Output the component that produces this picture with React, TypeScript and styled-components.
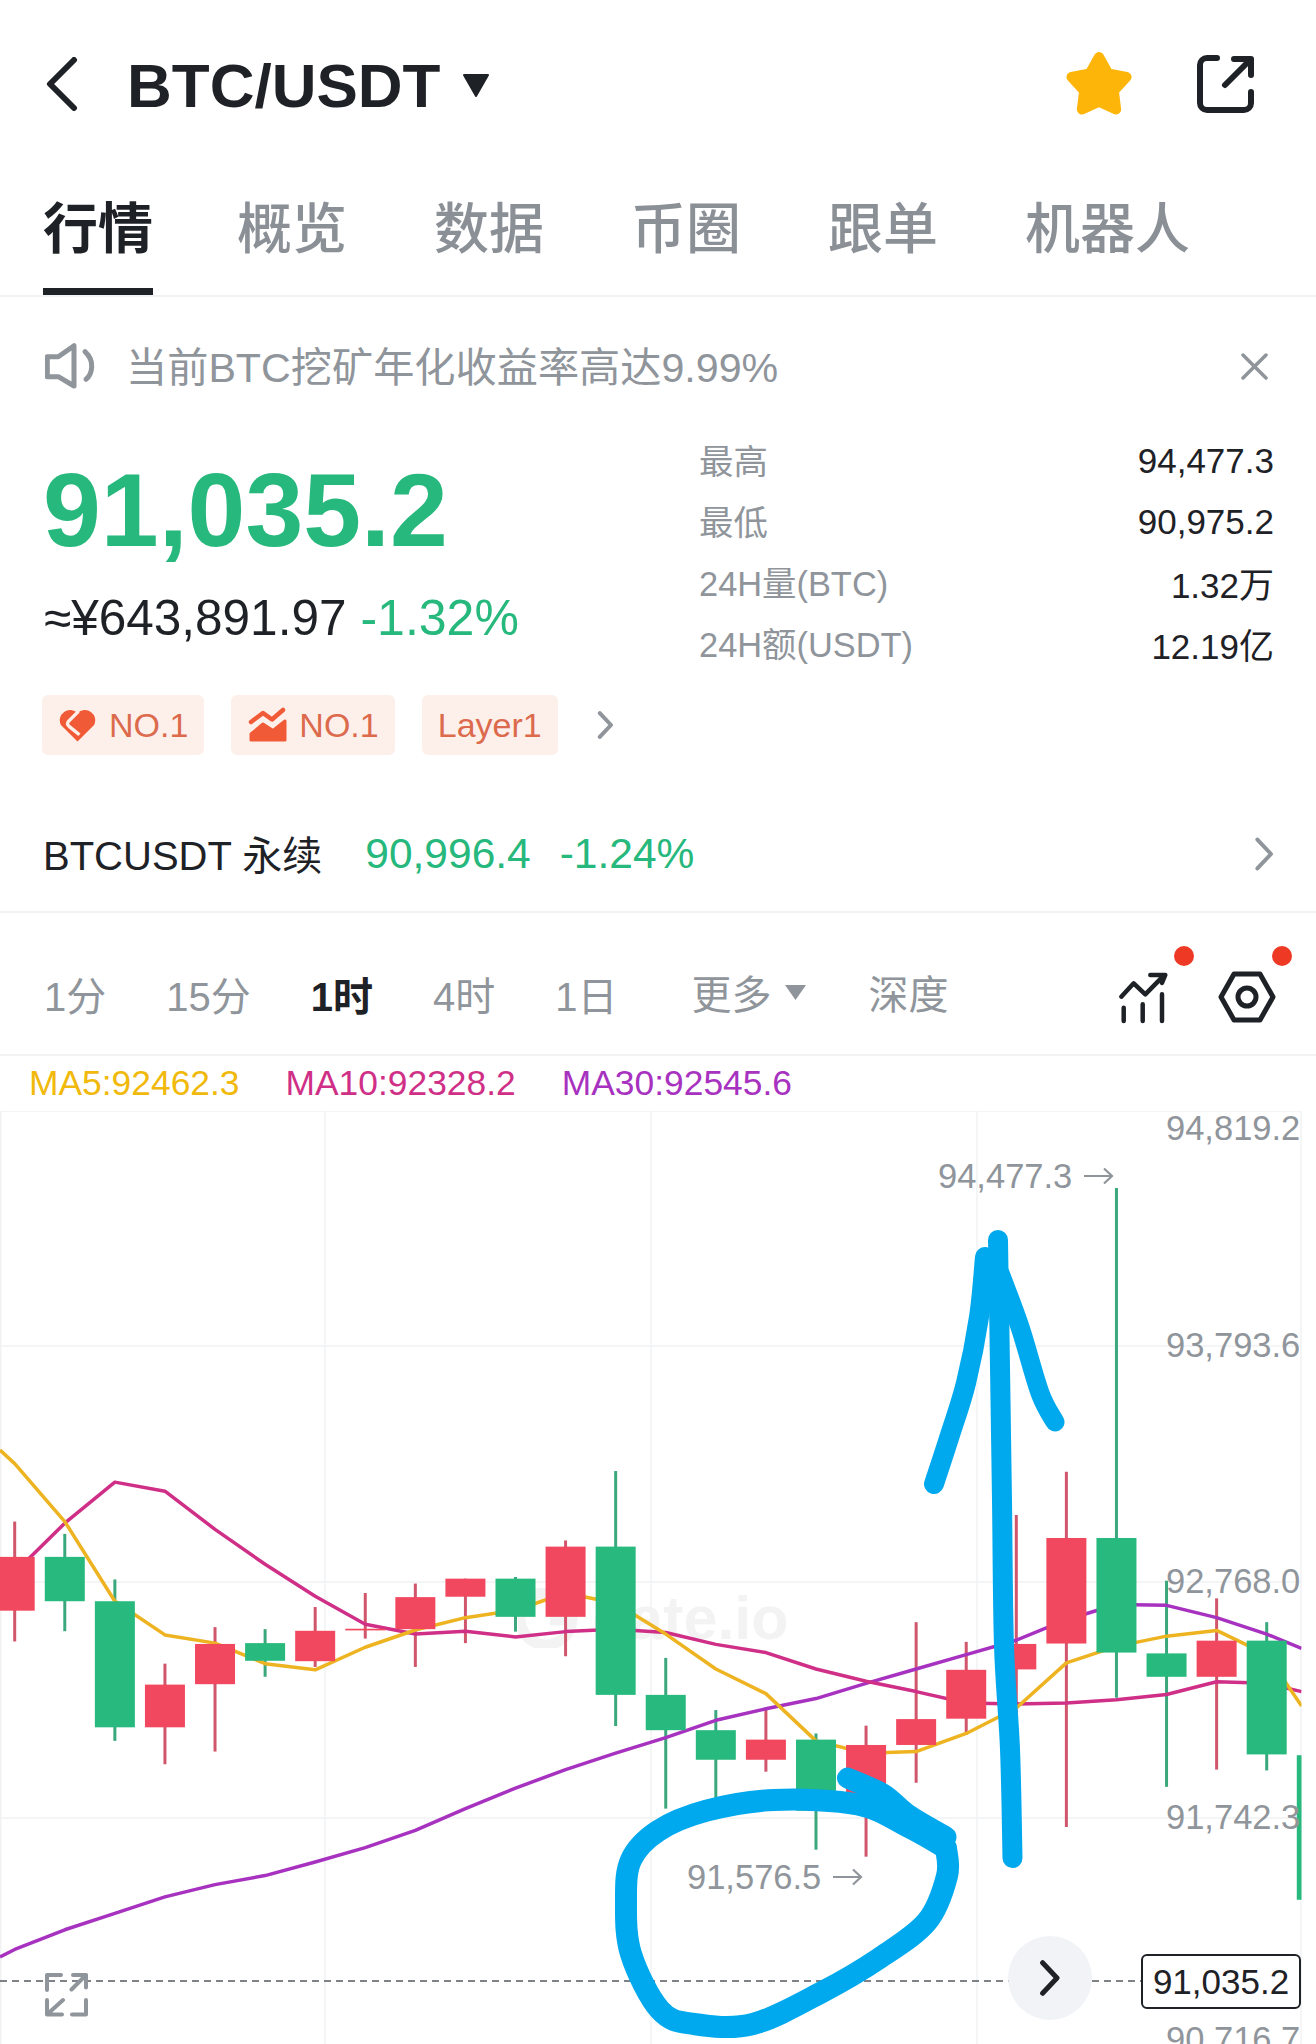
import React from "react";
import styled, { createGlobalStyle } from "styled-components";

const FONT = `"Liberation Sans", "Noto Sans CJK SC", sans-serif`;
const DARK = "#1e2126";
const GREY = "#8f959b";
const GREEN = "#26b87c";
const LINE = "#f1f2f4";
const CHART_TOP = 1111;

// sampled positions: candles sit on a 50.08px grid
const slotX = (i: number) => 14.7 + 50.08 * i;
const sampleY = (v: number) => 1400 + v / 2.435;

type Candle = [boolean, number, number, number, number];

// [is green, high, low, body top, body bottom]
const CANDLES: Candle[] = [
  [false, 296, 588, 382, 513],
  [true, 326, 563, 382, 490],
  [true, 437, 830, 490, 797],
  [false, 642, 887, 693, 797],
  [false, 553, 856, 594, 692],
  [true, 558, 674, 592, 635],
  [false, 504, 650, 562, 636],
  [false, 470, 581, 557, 561],
  [false, 447, 650, 480, 558],
  [false, 435, 592, 435, 479],
  [true, 431, 564, 435, 528],
  [false, 342, 624, 357, 528],
  [true, 173, 794, 357, 718],
  [true, 628, 995, 718, 804],
  [true, 755, 972, 804, 876],
  [false, 750, 905, 827, 876],
  [true, 812, 1095, 827, 1000],
  [false, 793, 1112, 840, 990],
  [false, 541, 932, 777, 840],
  [false, 589, 815, 657, 776],
  [false, 280, 800, 594, 656],
  [false, 175, 1040, 336, 593],
  [true, -516, 725, 336, 615],
  [true, 440, 942, 617, 674],
  [false, 483, 900, 586, 674],
  [true, 541, 902, 586, 863],
  [true, 865, 1217, 865, 1217],
];

const MA5 = [155, 296, 490, 572, 592, 642, 657, 602, 560, 530, 512, 470, 495, 570, 655, 715, 830, 860, 856, 812, 750, 640, 600, 575, 561, 620];
const MA10 = [420, 300, 200, 222, 315, 400, 478, 546, 570, 563, 577, 564, 558, 566, 595, 615, 655, 685, 710, 738, 740, 738, 730, 717, 686, 690];
const MA30 = [1338, 1290, 1250, 1210, 1180, 1158, 1125, 1090, 1048, 995, 945, 900, 860, 822, 780, 752, 727, 690, 655, 620, 585, 535, 498, 500, 530, 570];

const maPoints = (values: number[], first: number, last: number) => {
  const pts = values.map((v, i) => `${slotX(i)},${sampleY(v)}`);
  return [`0,${sampleY(first)}`, ...pts, `1301.6,${sampleY(last)}`].join(" ");
};

// smooth a hand drawn stroke through its points
const smooth = (pts: number[][]) => {
  let d = `M${pts[0][0]} ${pts[0][1]}`;
  for (let i = 0; i < pts.length - 1; i++) {
    const p0 = pts[Math.max(i - 1, 0)];
    const p1 = pts[i];
    const p2 = pts[i + 1];
    const p3 = pts[Math.min(i + 2, pts.length - 1)];
    d += `C${p1[0] + (p2[0] - p0[0]) / 6} ${p1[1] + (p2[1] - p0[1]) / 6} ${p2[0] - (p3[0] - p1[0]) / 6} ${p2[1] - (p3[1] - p1[1]) / 6} ${p2[0]} ${p2[1]}`;
  }
  return d;
};

const SCRIBBLES = [
  { width: 20, pts: [[998, 1240], [1000, 1367], [1002, 1500], [1004, 1646], [1010, 1749], [1012.5, 1858]] },
  { width: 20, pts: [[985, 1257], [979, 1317], [966, 1383], [950, 1435], [934, 1484]] },
  { width: 19, pts: [[1000, 1273], [1020, 1327], [1040, 1393], [1055, 1422]] },
  { width: 21, pts: [[847.5, 1778], [883, 1794], [908.5, 1815], [946, 1837]] },
  { width: 22, pts: [[946, 1848], [908.5, 1827], [858, 1804.5], [774, 1800], [706.5, 1810.7], [658, 1831], [631, 1860], [626, 1901], [631, 1954], [660, 2010], [694, 2024], [753, 2024], [824, 1991], [879, 1958.5], [927, 1921.6], [947, 1876], [946, 1848]] },
];

const AXIS = [
  { label: "94,819.2", y: 1128 },
  { label: "93,793.6", y: 1345 },
  { label: "92,768.0", y: 1581 },
  { label: "91,742.3", y: 1817 },
  { label: "90,716.7", y: 2039 },
];

const TABS = ["行情", "概览", "数据", "币圈", "跟单", "机器人"];

const STATS = [
  ["最高", "94,477.3"],
  ["最低", "90,975.2"],
  ["24H量(BTC)", "1.32万"],
  ["24H额(USDT)", "12.19亿"],
];

const GlobalStyle = createGlobalStyle`
  html, body {
    margin: 0;
    padding: 0;
    background: #fff;
  }
  * {
    box-sizing: border-box;
  }
`;

const Page = styled.div`
  width: 1316px;
  height: 2044px;
  overflow: hidden;
  display: flex;
  flex-direction: column;
  background: #fff;
  color: ${DARK};
  font-family: ${FONT};
`;

const Header = styled.div`
  height: 130px;
  flex-shrink: 0;
  padding: 38px 60px 0 46px;
  display: flex;
  align-items: center;
`;

const Title = styled.div`
  margin: 4px 0 0 49px;
  font-size: 62px;
  font-weight: 700;
  line-height: 70px;
  white-space: nowrap;
`;

const TitleCaret = styled.svg`
  margin: 2px 0 0 22px;
  flex-shrink: 0;
`;

const HeaderActions = styled.div`
  margin-left: auto;
  display: flex;
  align-items: center;
  gap: 62px;
`;

const TabBar = styled.div`
  height: 167px;
  flex-shrink: 0;
  padding: 72px 0 0 43px;
  display: flex;
  gap: 87px;
  border-bottom: 2px solid ${LINE};
`;

const Tab = styled.div<{ $active?: boolean }>`
  height: 93px;
  padding-bottom: 31px;
  margin-right: ${(p) => (p.$active ? -3 : 0)}px;
  font-size: 55px;
  line-height: 55px;
  font-weight: ${(p) => (p.$active ? 700 : 500)};
  color: ${(p) => (p.$active ? DARK : "#8a9096")};
  border-bottom: 7px solid ${(p) => (p.$active ? DARK : "transparent")};
`;

const Notice = styled.div`
  height: 135px;
  flex-shrink: 0;
  padding: 3px 48px 0 45px;
  display: flex;
  align-items: center;
`;

const NoticeText = styled.div`
  margin-left: 31px;
  margin-bottom: 5px;
  font-size: 41.200px;
  color: ${GREY};
  white-space: nowrap;
`;

const NoticeClose = styled.svg`
  margin-left: auto;
`;

const Summary = styled.div`
  height: 393px;
  flex-shrink: 0;
  padding: 0 42px 0 44px;
  display: flex;
`;

const PriceColumn = styled.div`
  width: 655px;
  flex-shrink: 0;
  display: flex;
  flex-direction: column;
`;

const LastPrice = styled.div`
  margin-top: 23px;
  font-size: 104px;
  line-height: 110px;
  font-weight: 700;
  color: ${GREEN};
  margin-left: -1px;
`;

const SubPrice = styled.div`
  margin-top: 23px;
  display: flex;
  gap: 14px;
  font-size: 49.500px;
  line-height: 60px;
  font-weight: 500;
  white-space: nowrap;
`;

const Change = styled.span`
  color: ${GREEN};
  font-size: 50px;
`;

const TagRow = styled.div`
  margin-top: 47px;
  margin-left: -2px;
  display: flex;
  align-items: center;
  gap: 27px;
`;

const Tag = styled.div`
  height: 60px;
  padding: 0 16px;
  display: flex;
  align-items: center;
  gap: 12px;
  border-radius: 6px;
  background: #fdf0eb;
  color: #dc6a4d;
  font-size: 34px;
`;

const TagMore = styled.div`
  margin-left: 12px;
  display: flex;
`;

const StatsColumn = styled.div`
  flex: 1;
  margin-top: -2px;
  display: flex;
  flex-direction: column;
`;

const StatRow = styled.div`
  height: 61px;
  display: flex;
  align-items: center;
  justify-content: space-between;
  font-size: 35px;
`;

const StatLabel = styled.span`
  color: ${GREY};
  font-size: 34.400px;
  margin-bottom: 3px;
`;

const PerpRow = styled.div`
  height: 88px;
  flex-shrink: 0;
  padding: 0 42px 28px 43px;
  display: flex;
  align-items: center;
  border-bottom: 2px solid ${LINE};
  font-size: 40px;
  white-space: nowrap;
`;

const PerpName = styled.span`
  margin-bottom: 3px;
`;

const PerpPrice = styled.span`
  margin-left: 43px;
  font-size: 42.500px;
  color: ${GREEN};
`;

const PerpChange = styled.span`
  margin-left: 29px;
  font-size: 42.500px;
  color: ${GREEN};
`;

const PerpMore = styled.div`
  margin-left: auto;
  display: flex;
`;

const IntervalBar = styled.div`
  height: 143px;
  flex-shrink: 0;
  padding: 27px 39px 0 44px;
  display: flex;
  align-items: center;
  gap: 60px;
  border-bottom: 2px solid ${LINE};
  font-size: 40px;
  color: ${GREY};
  white-space: nowrap;
`;

const Interval = styled.span<{ $active?: boolean; $lift?: number }>`
  margin-bottom: ${(p) => p.$lift ?? 6}px;
  color: ${(p) => (p.$active ? DARK : GREY)};
  font-weight: ${(p) => (p.$active ? 700 : 400)};
`;

const MoreInterval = styled.span`
  margin-left: 14px;
  margin-right: 3px;
  margin-bottom: 10px;
  display: flex;
  align-items: center;
  gap: 13px;
`;

const ChartTools = styled.div`
  margin-left: auto;
  display: flex;
  align-items: center;
  gap: 48px;
`;

const ToolButton = styled.div`
  position: relative;
  display: flex;
`;

const RedDot = styled.span<{ $right: number }>`
  position: absolute;
  top: -24px;
  right: ${(p) => p.$right}px;
  width: 20px;
  height: 20px;
  border-radius: 50%;
  background: #ee3a24;
`;

const MaRow = styled.div`
  height: 55px;
  flex-shrink: 0;
  padding-left: 29px;
  display: flex;
  align-items: center;
  gap: 46px;
  font-size: 35.400px;
  white-space: nowrap;
`;

const MaValue = styled.span<{ $color: string }>`
  color: ${(p) => p.$color};
`;

const Chart = styled.div`
  position: relative;
  flex: 1;
  overflow: hidden;
`;

const ChartCanvas = styled.svg`
  position: relative;
  display: block;
`;

const Watermark = styled.div`
  position: absolute;
  left: 518px;
  top: 472px;
  display: flex;
  align-items: center;
  gap: 14px;
  font-size: 61px;
  line-height: 70px;
  font-weight: 700;
  color: #f3f3f4;
`;

const ChartLabel = styled.div<{ $left: number; $y: number }>`
  position: absolute;
  left: ${(p) => p.$left}px;
  top: ${(p) => p.$y - CHART_TOP - 17}px;
  display: flex;
  align-items: center;
  gap: 11px;
  line-height: 34px;
  font-size: 34.500px;
  color: ${GREY};
  white-space: nowrap;
`;

const ScrollButton = styled.div`
  position: absolute;
  left: 1008px;
  top: 825px;
  width: 84px;
  height: 84px;
  border-radius: 50%;
  background: #f1f3f7;
  display: flex;
  align-items: center;
  justify-content: center;
`;

const PriceBox = styled.div`
  position: absolute;
  left: 1141px;
  top: 843px;
  width: 160px;
  height: 55px;
  border: 2px solid ${DARK};
  border-radius: 6px;
  background: #fff;
  display: flex;
  align-items: center;
  justify-content: center;
  font-size: 35px;
`;

const Expand = styled.svg`
  position: absolute;
  left: 45px;
  top: 862px;
`;

const Chevron: React.FC<{ height: number; color: string; width?: number }> = ({ height, color, width = 4 }) => (
  <svg width={height * 0.6} height={height} viewBox="0 0 12 20" fill="none">
    <path d="M2 1.500 10 10 2 18.500" stroke={color} strokeWidth={width * 20 / height} strokeLinecap="round" strokeLinejoin="round" />
  </svg>
);

const CrackedHeart = () => (
  <svg width="39" height="36" viewBox="0 0 40 36">
    <path d="M20 35 3 18a10.500 10.500 0 0 1 17-12 10.500 10.500 0 0 1 17 12Z" fill="#f15a36" />
    <path d="M21 4 11 14q-3 3 1 6l10 8" fill="none" stroke="#fdf0eb" strokeWidth="3.500" />
  </svg>
);

const TrendBadge = () => (
  <svg width="40" height="37" viewBox="0 0 40 37">
    <path d="M4 15 16 6l9 6.500L36 3" fill="none" stroke="#f15a36" strokeWidth="4.500" strokeLinecap="round" strokeLinejoin="round" />
    <path d="M4 27 16 17l10 6.500L38 14v19H4Z" fill="#f15a36" stroke="#f15a36" strokeWidth="3" strokeLinejoin="round" />
  </svg>
);

const ThinArrow = () => (
  <svg width="31" height="20" viewBox="0 0 31 20" fill="none">
    <path d="M1 10h28M21 2.500 29 10l-8 7.500" stroke={GREY} strokeWidth="2.200" />
  </svg>
);

export default function App() {
  return (
    <Page>
      <GlobalStyle />
      <Header>
        <svg width="32" height="54" viewBox="0 0 32 54" fill="none">
          <path d="M28 3 4 27l24 24" stroke={DARK} strokeWidth="6" strokeLinecap="round" strokeLinejoin="round" />
        </svg>
        <Title>BTC/USDT</Title>
        <TitleCaret width="28" height="25" viewBox="0 0 28 25">
          <path d="M2 2h24L14 23Z" fill={DARK} stroke={DARK} strokeWidth="2" strokeLinejoin="round" />
        </TitleCaret>
        <HeaderActions>
          <svg width="70" height="66" viewBox="0 0 68 64">
            <path
              d="M34 6 42.800 21.900 60.600 25.300 48.300 38.600 50.500 56.700 34 49 17.500 56.700 19.700 38.600 7.400 25.300 25.200 21.900Z"
              fill="#fdb50a"
              stroke="#fdb50a"
              strokeWidth="10"
              strokeLinejoin="round"
            />
          </svg>
          <svg width="60" height="60" viewBox="0 0 60 60" fill="none" stroke={DARK} strokeWidth="6" strokeLinecap="round" strokeLinejoin="round">
            <path d="M21 4H11a7 7 0 0 0-7 7v38a7 7 0 0 0 7 7h37a7 7 0 0 0 7-7V38" />
            <path d="M29 31 54 6" />
            <path d="M38 5h17v16" />
          </svg>
        </HeaderActions>
      </Header>

      <TabBar>
        {TABS.map((t, i) => (
          <Tab key={t} $active={i === 0}>{t}</Tab>
        ))}
      </TabBar>

      <Notice>
        <svg width="50" height="46" viewBox="0 0 50 46" fill="none" stroke={GREY} strokeWidth="5" strokeLinecap="round" strokeLinejoin="round">
          <path d="M2.300 13.700h11L29 2.700V43L13.300 33.700h-11Z" />
          <path d="M40 8.700q7 6.500 6.700 15T41 36.300" />
        </svg>
        <NoticeText>当前BTC挖矿年化收益率高达9.99%</NoticeText>
        <NoticeClose width="27" height="27" viewBox="0 0 27 27" fill="none">
          <path d="M2 2l23 23M25 2 2 25" stroke={GREY} strokeWidth="3.500" strokeLinecap="round" />
        </NoticeClose>
      </Notice>

      <Summary>
        <PriceColumn>
          <LastPrice>91,035.2</LastPrice>
          <SubPrice>
            <span>≈¥643,891.97</span>
            <Change>-1.32%</Change>
          </SubPrice>
          <TagRow>
            <Tag><CrackedHeart />NO.1</Tag>
            <Tag><TrendBadge />NO.1</Tag>
            <Tag>Layer1</Tag>
            <TagMore><Chevron height={28} color={GREY} /></TagMore>
          </TagRow>
        </PriceColumn>
        <StatsColumn>
          {STATS.map(([label, value]) => (
            <StatRow key={label}>
              <StatLabel>{label}</StatLabel>
              <span>{value}</span>
            </StatRow>
          ))}
        </StatsColumn>
      </Summary>

      <PerpRow>
        <PerpName>BTCUSDT 永续</PerpName>
        <PerpPrice>90,996.4</PerpPrice>
        <PerpChange>-1.24%</PerpChange>
        <PerpMore><Chevron height={34} color={GREY} /></PerpMore>
      </PerpRow>

      <IntervalBar>
        <Interval>1分</Interval>
        <Interval>15分</Interval>
        <Interval $active>1时</Interval>
        <Interval>4时</Interval>
        <Interval>1日</Interval>
        <MoreInterval>
          更多
          <svg width="21" height="15" viewBox="0 0 21 15">
            <path d="M0 0h21L10.500 15Z" fill={GREY} />
          </svg>
        </MoreInterval>
        <Interval $lift={10}>深度</Interval>
        <ChartTools>
          <ToolButton>
            <svg width="52" height="54" viewBox="0 0 52 54" fill="none" stroke={DARK} strokeWidth="4.500" strokeLinecap="round" strokeLinejoin="round">
              <path d="M4.300 26.700 16.700 13.300l11.600 11L46.700 5.700" />
              <path d="M33.300 5h15L45 13" />
              <path d="M6.700 37.700V51M25.700 34.300V51M45 24.300V51" />
            </svg>
            <RedDot $right={-25} />
          </ToolButton>
          <ToolButton>
            <svg width="60" height="54" viewBox="0 0 60 54" fill="none" stroke={DARK} strokeWidth="5" strokeLinejoin="round">
              <path d="M4 27 17 4h26l13 23-13 23H17Z" />
              <circle cx="30" cy="27" r="9" />
            </svg>
            <RedDot $right={-15} />
          </ToolButton>
        </ChartTools>
      </IntervalBar>

      <MaRow>
        <MaValue $color="#f0b90b">MA5:92462.3</MaValue>
        <MaValue $color="#cf2f86">MA10:92328.2</MaValue>
        <MaValue $color="#a832c0">MA30:92545.6</MaValue>
      </MaRow>

      <Chart>
        <Watermark>
          <svg width="60" height="60" viewBox="0 0 60 60" fill="none">
            <path d="M48 14a26 26 0 1 0 6 18H32" stroke="#f3f3f4" strokeWidth="11" />
          </svg>
          gate.io
        </Watermark>
        <ChartCanvas width="1316" height="933" viewBox={`0 ${CHART_TOP} 1316 933`} fill="none">
          <defs>
            <clipPath id="plot">
              <rect x="0" y={CHART_TOP} width="1301.5" height="933" />
            </clipPath>
          </defs>
          <g stroke={LINE} strokeWidth="1.500">
            {[1111, 1346, 1582, 1818].map((y) => (
              <line key={y} x1="0" x2="1301" y1={y} y2={y} />
            ))}
            {[0.75, 325, 651, 977, 1301].map((x) => (
              <line key={x} x1={x} x2={x} y1={CHART_TOP} y2="2044" />
            ))}
          </g>
          <line x1="0" x2="1141" y1="1981" y2="1981" stroke="#555a60" strokeWidth="1.500" strokeDasharray="7 5" />
          <g clipPath="url(#plot)">
            {CANDLES.map(([up, high, low], i) => (
              <line
                key={i}
                x1={slotX(i)}
                x2={slotX(i)}
                y1={sampleY(high)}
                y2={sampleY(low)}
                stroke={up ? "#3aa87c" : "#d0566b"}
                strokeWidth="3"
              />
            ))}
            <polyline points={maPoints(MA30, 1356, 605)} stroke="#a832c0" strokeWidth="3.500" strokeLinejoin="round" />
            <polyline points={maPoints(MA10, 450, 710)} stroke="#cf2f86" strokeWidth="3.500" strokeLinejoin="round" />
            <polyline points={maPoints(MA5, 122, 745)} stroke="#eeb321" strokeWidth="3.500" strokeLinejoin="round" />
            {CANDLES.map(([up, , , top, bottom], i) => (
              <rect
                key={i}
                x={slotX(i) - 20}
                y={sampleY(top)}
                width="40"
                height={sampleY(bottom) - sampleY(top)}
                fill={up ? "#27b97d" : "#f2485f"}
              />
            ))}
          </g>
          <g stroke="#00a9ee" strokeLinecap="round" strokeLinejoin="round">
            {SCRIBBLES.map((s, i) => (
              <path key={i} d={smooth(s.pts)} strokeWidth={s.width} />
            ))}
          </g>
        </ChartCanvas>

        {AXIS.map((a) => (
          <ChartLabel key={a.label} $left={1166} $y={a.y}>{a.label}</ChartLabel>
        ))}
        <ChartLabel $left={938} $y={1176}>94,477.3<ThinArrow /></ChartLabel>
        <ChartLabel $left={687} $y={1877}>91,576.5<ThinArrow /></ChartLabel>

        <Expand width="44" height="44" viewBox="0 0 44 44" fill="none" stroke={GREY} strokeWidth="4" strokeLinecap="round" strokeLinejoin="round">
          <path d="M2 17V2h14" />
          <path d="M26.500 16.500 41 2M28 2h13v12.500" />
          <path d="M18 27 2 41.500M2 27v14.500h15" />
          <path d="M41 27v14.500H27" />
        </Expand>

        <ScrollButton>
          <Chevron height={36} color={DARK} width={5} />
        </ScrollButton>
        <PriceBox>91,035.2</PriceBox>
      </Chart>
    </Page>
  );
}
